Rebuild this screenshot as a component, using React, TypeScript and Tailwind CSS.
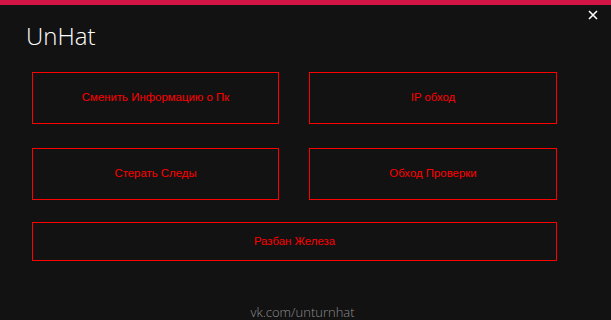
const BTN =
  'flex items-center justify-center border border-[#ff0000] text-[#ff0000] text-[11.4px] bg-transparent';

export default function App() {
  return (
    <div className="w-[611px] h-[320px] bg-[#121212] flex flex-col overflow-hidden font-['Liberation_Sans',sans-serif]">
      {/* top accent */}
      <div className="h-[5px] bg-[#d31545] shrink-0" />

      {/* title row */}
      <div className="relative h-[45px] pl-[26px] pt-[17px]">
        <h1 className="text-[24px] leading-[28px] font-light text-white font-['Open_Sans',sans-serif]">UnHat</h1>
        <svg
          className="absolute left-[588px] top-[5px] w-[10px] h-[10px]"
          viewBox="0 0 10 10"
          fill="none"
          stroke="white"
          strokeWidth={1.6}
        >
          <path d="M1 1 L9 9 M9 1 L1 9" />
        </svg>
      </div>

      {/* buttons */}
      <div className="pl-[32px] pt-[22px] flex flex-col w-[557px]">
        <div className="grid grid-cols-[247px_248px] gap-x-[30px] gap-y-[24px]">
          <button className={`${BTN} h-[52px]`}>Сменить Информацию о Пк</button>
          <button className={`${BTN} h-[52px]`}>IP обход</button>
          <button className={`${BTN} h-[52px]`}>Стерать Следы</button>
          <button className={`${BTN} h-[52px]`}>Обход Проверки</button>
        </div>
        <button className={`${BTN} h-[39px] mt-[22px]`}>Разбан Железа</button>
      </div>

      <div className="mt-auto text-center pr-[6px] text-[13px] leading-[16px] font-light text-[#8c8c8c] font-['Open_Sans',sans-serif]">
        vk.com/unturnhat
      </div>
    </div>
  );
}
